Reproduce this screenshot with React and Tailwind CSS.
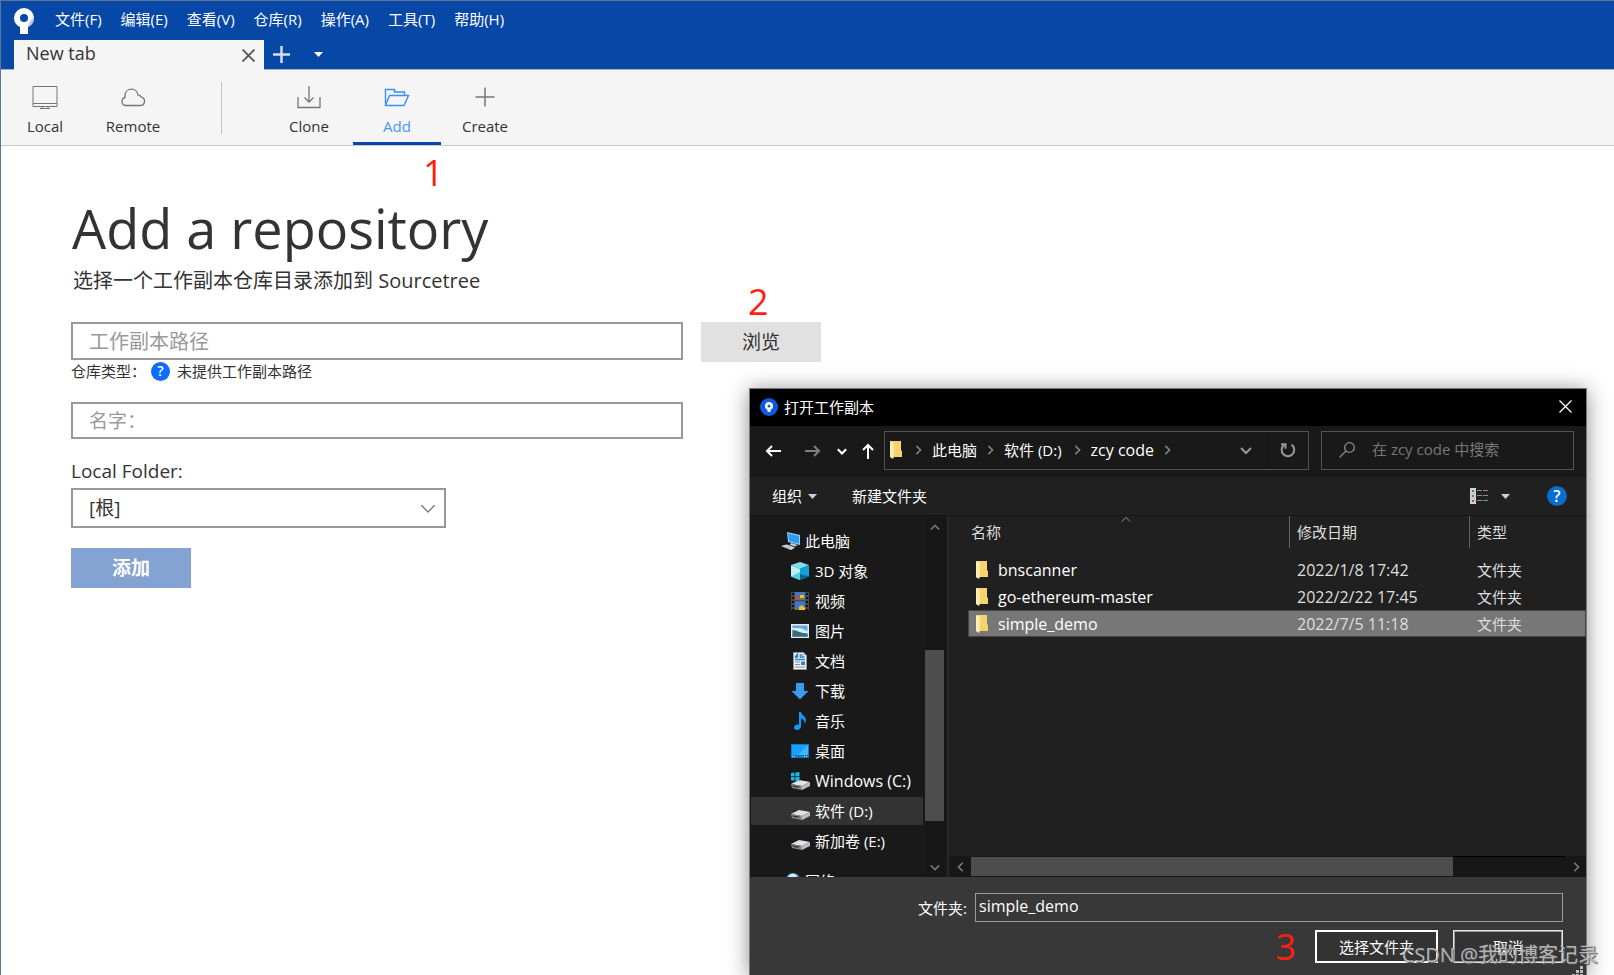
import React, { useState } from 'react';

const MENU = ['文件(F)', '编辑(E)', '查看(V)', '仓库(R)', '操作(A)', '工具(T)', '帮助(H)'];

const FILES = [
    { name: 'bnscanner', date: '2022/1/8 17:42', type: '文件夹' },
    { name: 'go-ethereum-master', date: '2022/2/22 17:45', type: '文件夹' },
    { name: 'simple_demo', date: '2022/7/5 11:18', type: '文件夹' },
];

/* ---------- icons ---------- */

const Logo = () => (
    <svg className="w-5 h-[26px]" viewBox="0 0 20 26">
        <defs>
            <linearGradient id="tail" x1="0.4" y1="0" x2="1" y2="0.5">
                <stop offset="0" stopColor="#fff" />
                <stop offset="1" stopColor="#7f9fd2" />
            </linearGradient>
        </defs>
        <path fill="#fff" fillRule="evenodd" d="M10 0a10 10 0 0 1 10 10c0 4-2.500 7.500-6 9v7H6v-7c-3.500-1.500-6-5-6-9A10 10 0 0 1 10 0zm0 6a4 4 0 1 0 0 8a4 4 0 0 0 0-8z" />
        <path fill="url(#tail)" d="M14 11l6-1c0 4-2.500 7.500-6 9v-4z" />
    </svg>
);

const Chevron = ({ d, className, size = 'w-3 h-3', width = 2 }) => {
    const paths = {
        right: 'M4 1l5 5l-5 5',
        left: 'M8 1L3 6l5 5',
        down: 'M1 4l5 5l5-5',
        up: 'M1 9l5-5l5 5',
    };
    return (
        <svg className={`${size} shrink-0 ${className}`} viewBox="0 0 12 12" fill="none" stroke="currentColor" strokeWidth={width}>
            <path d={paths[d]} />
        </svg>
    );
};

const Triangle = ({ className }) => (
    <svg className={`w-[9px] h-[5px] shrink-0 ${className}`} viewBox="0 0 9 5"><path fill="currentColor" d="M0 0h9L4.500 5z" /></svg>
);

const LocalIcon = () => (
    <svg className="w-[26px] h-6" viewBox="0 0 26 24" fill="none" stroke="#757575">
        <path d="M1 1.500h24v20H1zM1 18.500h24M10 21.500v2M16 21.500v2M8 23.500h10" />
    </svg>
);

const CloudIcon = () => (
    <svg className="w-[26px] h-6" viewBox="0 0 26 24" fill="none" stroke="#757575" strokeWidth="1.300">
        <path d="M5.500 20.500h14.800a4.300 4.300 0 0 0 1.200-8.400a5 5 0 0 0-3.600-2.300A6.500 6.500 0 0 0 5 10v2.500a4.100 4.100 0 0 0 .5 8z" />
    </svg>
);

const CloneIcon = () => (
    <svg className="w-[26px] h-6" viewBox="0 0 26 24" fill="none" stroke="#757575" strokeWidth="1.300">
        <path d="M2 12v10.500h22V12M13 1v16M8.500 12.500L13 17l4.500-4.500" />
    </svg>
);

const AddIcon = () => (
    <svg className="w-[26px] h-6" viewBox="0 0 26 24" fill="none" stroke="#3592f8" strokeWidth="1.400">
        <path d="M1.500 20V4.500h9v2.500h10v3.500M1.500 20.500l4-10h19l-4.500 10z" />
    </svg>
);

const CreateIcon = () => (
    <svg className="w-[26px] h-6" viewBox="0 0 26 24" fill="none" stroke="#757575" strokeWidth="1.500">
        <path d="M13 2.500v19M3.500 12h19" />
    </svg>
);

const HelpDot = ({ className }) => (
    <span className={`flex items-center justify-center rounded-full text-white font-semibold shrink-0 ${className}`}>?</span>
);

const FolderIcon = () => (
    <svg className="w-[13px] h-[18px] shrink-0" viewBox="0 0 13 18">
        <path fill="#f5d36d" d="M1 0h10v9l1 1v6H1z" />
        <path fill="#ffe9a6" d="M0 0l4 2v13.500L3 18l-3-2z" />
        <path fill="#fff0c0" d="M0 0l1 .5V16.500L0 16z" />
    </svg>
);

const PcIcon = () => (
    <svg className="w-5 h-[18px]" viewBox="0 0 20 18">
        <path fill="#8fd0f5" d="M6 0l13 3v10L7 10z" />
        <path fill="#2a9df4" d="M7 1.500l11 2.500v7.500L8 9z" />
        <path fill="#c5ced6" d="M10 11l7 2l-3 1.500l-5-1.500z" />
        <path fill="#e3e7ea" d="M0 14l6-1.500l8 3L10 18z" />
        <path stroke="#8a949c" strokeWidth=".6" d="M3 14.500l7 2M5 13.500l7 2" />
    </svg>
);

const CubeIcon = () => (
    <svg className="w-[18px] h-[18px]" viewBox="0 0 18 18">
        <path fill="#7fdcea" d="M9 0l9 3l-9 4L0 3z" />
        <path fill="#bdf0f3" d="M0 3l9 4v11L0 14.500z" />
        <path fill="#12a2d6" d="M18 3L9 7v11l9-3.500z" />
        <path fill="#54cfdd" d="M0 14.500L9 10v8z" />
        <path fill="#04658f" d="M18 14.500L9 12v6z" />
    </svg>
);

const VideoIcon = () => (
    <svg className="w-[18px] h-[18px]" viewBox="0 0 18 18">
        <path fill="#4a4a4a" d="M0 0h18v18H0z" />
        <path fill="#3b78d0" d="M4 0h10v8H4zM4 9.500h10V18H4z" />
        <path fill="#d8432e" d="M4 5l4 1v2H4zM8 2h3v3H8z" />
        <path fill="#e9c22f" d="M9 3h4v4H9zM8 15l3-2l3 3v2H8z" />
        <path fill="#3f8f3c" d="M8 6h5v2H8zM4 16h4v2H4z" />
        <path stroke="#111" strokeWidth="2" strokeDasharray="2 2" d="M2 1v17M16 1v17" />
    </svg>
);

const PictureIcon = () => (
    <svg className="w-[18px] h-[14px]" viewBox="0 0 18 14">
        <path fill="#e9e9e9" d="M0 0h18v14H0z" />
        <path fill="#5fa9e8" d="M1.500 1.500h15v11h-15z" />
        <path fill="#d9eefb" d="M1.500 4l8 0l7 3v2h-15z" />
        <path fill="#3a6e5c" d="M1.500 6c4 0 8 3 15 4v2.500h-15z" />
        <path fill="#2b6fa5" d="M1.500 10.500h15v2h-15z" />
    </svg>
);

const DocIcon = () => (
    <svg className="w-[18px] h-[18px]" viewBox="0 0 18 18">
        <path fill="#f1f1f1" stroke="#9a9a9a" strokeWidth=".7" d="M2.500.5h10l3 3v14h-13z" />
        <path fill="#bcbcbc" d="M12.500.5l3 3h-3z" />
        <path stroke="#1f84cf" strokeWidth="1.300" d="M4 5.500L6.500 2v3.500M8.500 3h3M8.500 5h5M4 7.500h10" />
        <path stroke="#7d93a5" d="M4 10h5M4 12.500h5M4 15h10" />
        <path fill="#3a7fb8" d="M10 9.500h4V13h-4z" />
    </svg>
);

const DownloadIcon = () => (
    <svg className="w-[18px] h-[18px]" viewBox="0 0 18 18">
        <path fill="#3b9bea" d="M5 1h8v8h4.500L9 17.500L.5 9H5z" />
    </svg>
);

const MusicIcon = () => (
    <svg className="w-[18px] h-[18px]" viewBox="0 0 18 18">
        <path fill="#0f9af5" d="M8 0h2c0 3 5 4 5 8c0 1.500-.5 2.500-1.500 3.500C14 8.500 12 7 10 6.500V14c0 2-1.500 4-4 4c-1.800 0-3-1-3-2.500C3 13.500 5 12 8 12.500z" />
    </svg>
);

const DesktopIcon = () => (
    <svg className="w-[18px] h-[14px]" viewBox="0 0 18 14">
        <path fill="#0b78c9" d="M0 0h18v14H0z" />
        <path fill="#19a0fb" d="M1 1h16v10H1z" />
        <path fill="#45b4ff" d="M17 1v10H7z" />
        <path stroke="#d6efff" strokeDasharray="1 1" d="M1 12.500h3M13 12.500h4" />
    </svg>
);

const DriveIcon = ({ windows }) => (
    <svg className="w-[19px] h-[18px]" viewBox="0 0 19 18">
        <path fill="#e2e2e2" d="M0 12l8-4l11 2l-8 4z" />
        <path fill="#8e8e8e" d="M0 12l11 2v4l-10-2z" />
        <path fill="#bdbdbd" d="M11 14l8-4v4l-8 4z" />
        <path fill="#353535" d="M1.500 13.300l7 1.300v1.600l-7-1.400z" />
        <path fill="#35c235" d="M7 15h1v1H7z" />
        {windows && <path fill="#18b6ee" d="M0 1l3.500-.5v3.700H0zM4.300.4L8.500 0v4.200H4.300zM0 5h3.500v3.700L0 8.300zM4.300 5h4.200v4.200l-4.200-.4z" />}
    </svg>
);

const NetworkIcon = () => (
    <svg className="w-5 h-[18px]" viewBox="0 0 20 18">
        <circle cx="12" cy="8" r="7" fill="#4b9fc9" />
        <path fill="#cfeefb" d="M7 5c2-4 7-4 9-1c-2 2-3 0-5 2s-3 0-4-1z" />
        <path fill="#d7dde2" d="M0 6l4-1v8l-4-1z" />
    </svg>
);

const TREE = [
    { label: '此电脑', icon: <PcIcon />, root: true },
    { label: '3D 对象', icon: <CubeIcon /> },
    { label: '视频', icon: <VideoIcon /> },
    { label: '图片', icon: <PictureIcon /> },
    { label: '文档', icon: <DocIcon /> },
    { label: '下载', icon: <DownloadIcon /> },
    { label: '音乐', icon: <MusicIcon /> },
    { label: '桌面', icon: <DesktopIcon /> },
    { label: 'Windows (C:)', icon: <DriveIcon windows />, latin: true },
    { label: '软件 (D:)', icon: <DriveIcon />, active: true },
    { label: '新加卷 (E:)', icon: <DriveIcon /> },
    { label: '网络', icon: <NetworkIcon />, root: true, last: true },
];

/* ---------- main window ---------- */

const NavButton = ({ icon, label, active, children }) => (
    <button className={`relative w-[88px] h-[75px] pt-[15px] flex flex-col items-center border-b-3 ${active ? 'text-[#4598f9] border-[#0747a6]' : 'text-[#333] border-transparent'}`}>
        {icon}
        <span className="mt-[7px] text-[15px] leading-5">{label}</span>
        {children}
    </button>
);

const Header = () => (
    <header>
        <div className="bg-[#0747a6]">
            <div className="h-[39px] flex items-center pl-[13px]">
                <Logo />
                <nav className="flex gap-[19px] ml-[21px] pb-1 text-white text-[15px] leading-5">
                    {MENU.map((m) => <button key={m}>{m}</button>)}
                </nav>
            </div>
            <div className="h-[30px] flex border-b border-[#9fb4d3]">
                <div className="w-[250px] h-[30px] ml-[13px] bg-[#f5f5f5] flex justify-between pl-3 pr-[9px]">
                    <span className="text-lg leading-[26px] text-[#333]">New tab</span>
                    <button aria-label="Close tab">
                        <svg className="w-[13px] h-[13px]" viewBox="0 0 13 13" stroke="#555" strokeWidth="1.800"><path d="M.5.5l12 12M12.500.5l-12 12" /></svg>
                    </button>
                </div>
                <button aria-label="New tab" className="ml-[9px]">
                    <svg className="w-[17px] h-[17px]" viewBox="0 0 17 17" stroke="#d3def0" strokeWidth="2.500"><path d="M8.500 0v17M0 8.500h17" /></svg>
                </button>
                <button aria-label="Tab list" className="ml-6 text-white"><Triangle /></button>
            </div>
        </div>
        <div className="bg-[#f5f5f5] border-b border-[#c8c8c8] flex items-center">
            <NavButton icon={<LocalIcon />} label="Local" />
            <NavButton icon={<CloudIcon />} label="Remote" />
            <div className="w-px h-[52px] bg-[#c4c4c4] ml-11 mr-[43px]" />
            <NavButton icon={<CloneIcon />} label="Clone" />
            <NavButton icon={<AddIcon />} label="Add" active>
                <span className="absolute left-[70px] top-[85px] text-4xl leading-9 text-[#ff1f10]">1</span>
            </NavButton>
            <NavButton icon={<CreateIcon />} label="Create" />
        </div>
    </header>
);

const AddRepository = () => (
    <main className="pl-[70px] pt-[52px] text-[#333]">
        <h1 className="text-[54px] leading-[60px] pl-px">Add a repository</h1>
        <p className="mt-[9px] text-xl leading-7 pl-0.5">选择一个工作副本仓库目录添加到 Sourcetree</p>
        <form onSubmit={(e) => e.preventDefault()}>
            <div className="mt-[27px] flex items-start gap-[18px]">
                <input
                    aria-label="工作副本路径"
                    placeholder="工作副本路径"
                    className="w-[612px] h-[38px] border-2 border-[#999] px-4 text-xl placeholder:text-[#999]"
                />
                <button type="button" className="relative w-[120px] h-10 bg-[#e1e1e1] text-[19px]">
                    浏览
                    <span className="absolute left-[47px] -top-[38px] text-4xl leading-9 text-[#ff1f10]">2</span>
                </button>
            </div>
            <div className="h-[18px] flex items-center text-[15px] leading-5">
                <span className="w-20">仓库类型：</span>
                <HelpDot className="w-[19px] h-[19px] bg-[#0d6efd] text-sm leading-4" />
                <span className="ml-[7px]">未提供工作副本路径</span>
            </div>
            <input
                aria-label="名字"
                placeholder="名字："
                className="block mt-[22px] w-[612px] h-[37px] border-2 border-[#999] px-4 text-[19px] placeholder:text-[#999]"
            />
            <label htmlFor="folder" className="block mt-[18px] text-[19px] leading-7">Local Folder:</label>
            <div className="relative mt-[3px] w-[375px]">
                <select id="folder" className="appearance-none block w-full h-10 border-2 border-[#999] px-4 text-[19px] bg-white">
                    <option>[根]</option>
                </select>
                <Chevron d="down" size="w-4 h-4" width={1} className="absolute right-2.5 top-3 text-[#777] pointer-events-none" />
            </div>
            <button type="submit" className="mt-5 w-[120px] h-10 bg-[#84a2d2] text-white text-[19px] font-bold">添加</button>
        </form>
    </main>
);

/* ---------- folder picker ---------- */

const AddressBar = () => (
    <div className="h-[51px] flex items-center pl-[14px] pr-3 pb-0.5 bg-[#191919] text-white">
        <button aria-label="Back">
            <svg className="w-5 h-3" viewBox="0 0 20 12" fill="none" stroke="#fff" strokeWidth="2"><path d="M17 6H3M8 1L3 6l5 5" /></svg>
        </button>
        <button aria-label="Forward" className="ml-[19px]">
            <svg className="w-5 h-3" viewBox="0 0 20 12" fill="none" stroke="#808080" strokeWidth="2"><path d="M2 6h14M11 1l5 5l-5 5" /></svg>
        </button>
        <button aria-label="Recent" className="ml-[14px]"><Chevron d="down" size="w-2.5 h-2.5" width={2.5} /></button>
        <button aria-label="Up" className="ml-[13px]">
            <svg className="w-4 h-4" viewBox="0 0 16 16" fill="none" stroke="#fff" strokeWidth="2"><path d="M8 16V2M3 7l5-5l5 5" /></svg>
        </button>
        <div className="ml-2 mr-3 flex-1 h-[39px] border border-[#535353] flex items-center pl-[5px] pb-0.5 text-[15px] leading-5">
            <FolderIcon />
            <Chevron d="right" size="w-2.5 h-2.5" className="ml-2.5 mr-[9px] text-[#808080]" />
            <span>此电脑</span>
            <Chevron d="right" size="w-2.5 h-2.5" className="ml-2 mr-[9px] text-[#808080]" />
            <span>软件 (D:)</span>
            <Chevron d="right" size="w-2.5 h-2.5" className="ml-2.5 mr-[9px] text-[#808080]" />
            <span className="text-base leading-5">zcy code</span>
            <Chevron d="right" size="w-2.5 h-2.5" className="ml-2 text-[#808080]" />
            <button aria-label="History" className="ml-auto mr-3.5"><Chevron d="down" className="text-[#999]" /></button>
            <button aria-label="Refresh" className="w-[42px] h-full flex items-center justify-center border-l border-[#141414]">
                <svg className="w-4 h-4" viewBox="0 0 16 16" fill="none" stroke="#999" strokeWidth="2">
                    <path d="M11.500 2.700A6.300 6.300 0 1 1 4 3M1 2.200h4.500v4.500" />
                </svg>
            </button>
        </div>
        <label className="w-[253px] h-[39px] border border-[#535353] flex items-center pl-[17px] pb-0.5">
            <svg className="w-4 h-4 shrink-0" viewBox="0 0 16 16" fill="none" stroke="#8a8a8a" strokeWidth="1.300"><circle cx="10.500" cy="5.500" r="4.800" /><path d="M7 9L.5 15.500" /></svg>
            <input aria-label="Search" placeholder="在 zcy code 中搜索" className="ml-[17px] min-w-0 flex-1 bg-transparent text-[15px] placeholder:text-[#777]" />
        </label>
    </div>
);

const Toolbar = () => (
    <div className="h-[39px] flex items-center pl-[22px] bg-[#202020] border-b border-[#151515] text-white text-[15px] leading-5">
        <button className="flex items-center gap-1.5">组织<Triangle className="text-[#d0d0d0]" /></button>
        <button className="ml-[35px]">新建文件夹</button>
        <button aria-label="View" className="ml-auto flex items-center gap-[13px]">
            <svg className="w-[18px] h-4" viewBox="0 0 18 16">
                <path fill="#e8e8e8" d="M0 0h6v16H0z" />
                <path fill="#fff" stroke="#8b8b8b" strokeWidth=".6" d="M1 1h4v4H1zM1 6h4v4H1zM1 11h4v4H1z" />
                <path fill="#2f77bd" d="M2 2h2v2H2z" />
                <path fill="#3c8f5a" d="M2 7h2v2H2z" />
                <path fill="#d13a2c" d="M2 12h2v2H2z" />
                <path stroke="#8f8f8f" d="M7 2.500h5M13 2.500h5M7 7.500h5M13 7.500h5M7 12.500h5M13 12.500h5" />
            </svg>
            <Triangle className="text-[#d0d0d0]" />
        </button>
        <button aria-label="Help" className="ml-[37px] mr-[19px]"><HelpDot className="w-5 h-5 bg-[#0a6ccf] text-base leading-5" /></button>
    </div>
);

const Tree = () => (
    <div className="w-[198px] shrink-0 flex bg-[#191919] border-r border-[#2e2e2e]">
        <ul className="flex-1 pt-2.5 flex flex-col overflow-hidden text-white text-[15px] leading-5">
            {TREE.map((t) => (
                <li
                    key={t.label}
                    className={`h-7 shrink-0 mb-px ml-px mr-0.5 flex items-center ${t.root ? 'pl-[30px] gap-1' : 'pl-10 gap-1.5'} ${t.active ? 'bg-[#333]' : ''} ${t.last ? 'mt-[11px]' : 'mt-px'}`}
                >
                    <span className={t.root ? 'w-5' : 'w-[18px]'}>{t.icon}</span>
                    <span className={t.latin ? 'text-base leading-5' : ''}>{t.label}</span>
                </li>
            ))}
        </ul>
        <div className="w-[22px] pr-[3px] flex flex-col bg-[#171717] text-[#777]">
            <button aria-label="Scroll up" className="h-[21px] flex items-center justify-center"><Chevron d="up" size="w-2.5 h-2.5" /></button>
            <div className="flex-[113]" />
            <div className="flex-[172] bg-[#4d4d4d]" />
            <div className="flex-[35]" />
            <button aria-label="Scroll down" className="h-[21px] flex items-center justify-center"><Chevron d="down" size="w-2.5 h-2.5" /></button>
        </div>
    </div>
);

const FileList = ({ selected, onSelect }) => (
    <div className="flex-1 min-w-0 flex flex-col bg-[#202020]">
        <div className="relative flex-1 pl-5">
            <Chevron d="up" size="w-2.5 h-2.5" width={1} className="absolute left-[173px] -top-0.5 text-[#aaa]" />
            <table className="w-full table-fixed border-collapse text-[15px] leading-5 text-[#dedede]">
                <thead>
                    <tr className="h-10 text-left align-top">
                        <th className="p-0 font-normal"><div className="h-8 pl-[3px] flex items-center">名称</div></th>
                        <th className="p-0 font-normal w-[180px]"><div className="h-8 pl-[7px] flex items-center border-l border-[#636363]">修改日期</div></th>
                        <th className="p-0 font-normal w-[117px]"><div className="h-8 pl-[7px] flex items-center border-l border-[#636363]">类型</div></th>
                    </tr>
                </thead>
                <tbody>
                    {FILES.map((f) => (
                        <tr key={f.name} onClick={() => onSelect(f.name)} className={`h-[27px] ${f.name === selected ? 'bg-[#777] outline outline-[#444] -outline-offset-1' : ''}`}>
                            <td className="p-0">
                                <div className="flex items-center gap-[9px] pl-2 text-base leading-5 text-white"><FolderIcon />{f.name}</div>
                            </td>
                            <td className="p-0 pl-2 text-base leading-5">{f.date}</td>
                            <td className="p-0 pl-2">{f.type}</td>
                        </tr>
                    ))}
                </tbody>
            </table>
        </div>
        <div className="h-[21px] ml-0.5 flex bg-[#171717] text-[#777]">
            <button aria-label="Scroll left" className="w-[21px] flex items-center justify-center"><Chevron d="left" size="w-2.5 h-2.5" /></button>
            <div className="flex-[482] bg-[#4d4d4d] my-px" />
            <div className="flex-[112] border-t border-black" />
            <button aria-label="Scroll right" className="w-[21px] flex items-center justify-center"><Chevron d="right" size="w-2.5 h-2.5" /></button>
        </div>
    </div>
);

const FolderDialog = () => {
    const [selected, setSelected] = useState('simple_demo');

    return (
        <section
            role="dialog"
            aria-label="打开工作副本"
            className="absolute top-[387px] right-[27px] bottom-0 w-[838px] flex flex-col border border-b-0 border-[#7a7a7a] shadow-[0_2px_20px_rgba(0,0,0,0.45)]"
        >
            <div className="h-[37px] flex items-center bg-black text-white pl-2.5 pr-[14px] pb-0.5">
                <svg className="w-[18px] h-[18px]" viewBox="0 0 18 18">
                    <circle cx="9" cy="9" r="9" fill="#0a5be0" />
                    <path fill="#fff" fillRule="evenodd" d="M9 4a4 4 0 0 1 1.500 7.700V14h-3v-2.300A4 4 0 0 1 9 4zm0 2.500a1.500 1.500 0 1 0 0 3a1.500 1.500 0 0 0 0-3z" />
                </svg>
                <span className="ml-1.5 text-[15px] leading-5">打开工作副本</span>
                <button aria-label="Close" className="ml-auto">
                    <svg className="w-[13px] h-[13px]" viewBox="0 0 13 13" stroke="#fff" strokeWidth="1.300"><path d="M.5.5l12 12M12.500.5l-12 12" /></svg>
                </button>
            </div>
            <AddressBar />
            <Toolbar />
            <div className="flex-1 min-h-0 flex">
                <Tree />
                <FileList selected={selected} onSelect={setSelected} />
            </div>
            <div className="relative h-[98px] shrink-0 pt-4 pr-[23px] bg-[#383838] text-white text-[15px] leading-5">
                <div className="flex items-center pl-[168px]">
                    <label htmlFor="dirname" className="w-[57px]">文件夹:</label>
                    <input
                        id="dirname"
                        value={selected}
                        onChange={(e) => setSelected(e.target.value)}
                        className="flex-1 min-w-0 h-[29px] pb-1 border border-[#9a9a9a] px-[3px] text-base leading-5"
                    />
                </div>
                <div className="mt-2 flex items-center justify-end">
                    <span className="mr-[19px] text-4xl leading-[33px] text-[#ff1f10]">3</span>
                    <button className="w-[123px] h-[33px] mr-[15px] border-2 border-white bg-[#333]">选择文件夹</button>
                    <button className="w-[110px] h-[33px] border border-[#e6e6e6] inset-ring inset-ring-[#9a9a9a] bg-[#333]">取消</button>
                </div>
                <svg className="absolute right-[3px] bottom-0 w-3 h-[9px]" viewBox="0 0 12 9" fill="#bdbdbd">
                    <path d="M9 0h3v3H9zM9 4h3v3H9zM5 4h3v3H5zM9 8h3v1H9zM5 8h3v1H5zM1 8h3v1H1z" />
                </svg>
            </div>
        </section>
    );
};

const App = () => (
    <div className="relative min-h-screen overflow-hidden bg-white border-t border-l border-[#5a7896] font-['Open_Sans','Noto_Sans_CJK_SC',sans-serif]">
        <Header />
        <AddRepository />
        <FolderDialog />
        <span className="absolute right-4 bottom-1.5 text-xl leading-7 text-[#c4c4c4]/90 [text-shadow:1px_1px_1px_#555] pointer-events-none">CSDN @我的博客记录</span>
    </div>
);

export default App;
